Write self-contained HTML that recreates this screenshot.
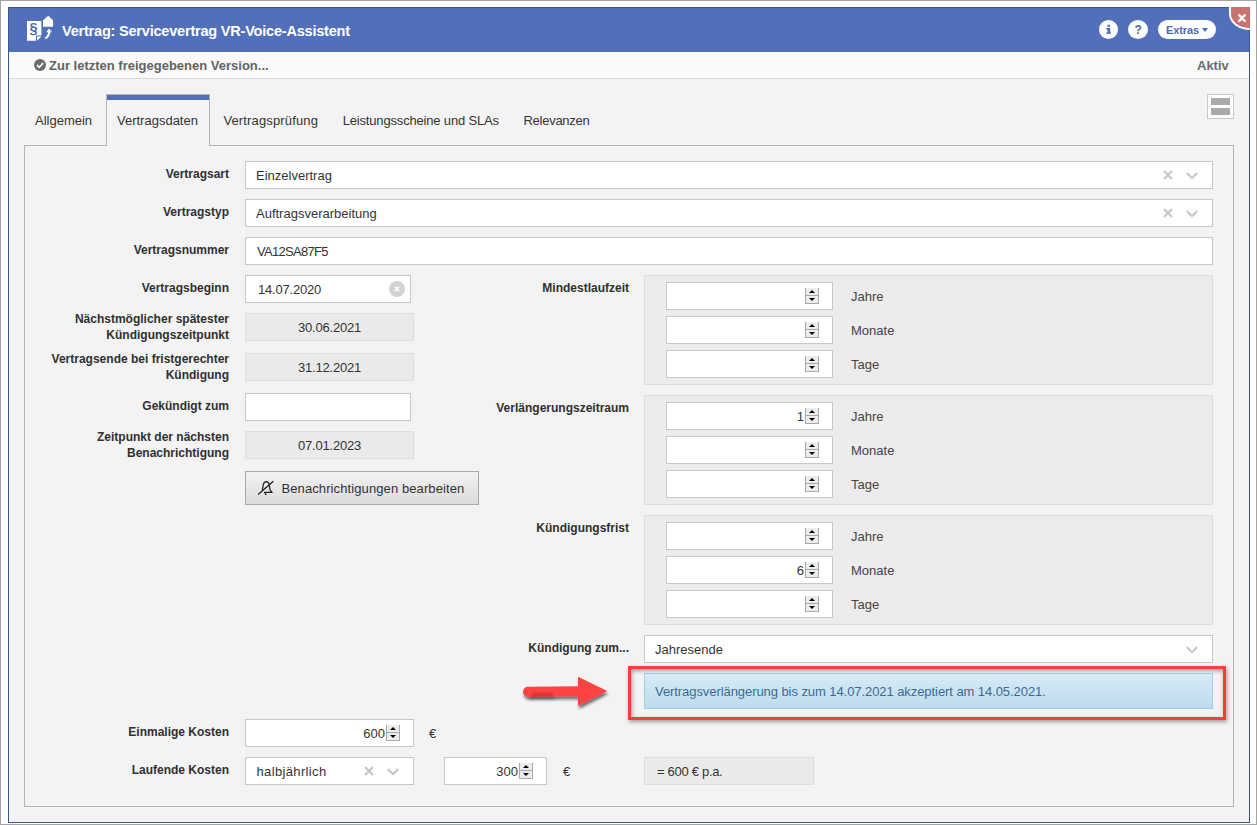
<!DOCTYPE html>
<html><head><meta charset="utf-8"><style>
*{box-sizing:border-box;margin:0;padding:0}
html,body{width:1257px;height:825px;overflow:hidden;background:#fff}
body{position:relative;font-family:"Liberation Sans",sans-serif;color:#333}
.a{position:absolute}
.t{position:absolute;white-space:nowrap;line-height:16px}
.lbl{position:absolute;white-space:nowrap;line-height:16px;font-size:12px;font-weight:bold;color:#2b2b2b;text-align:right;right:1028px}
.inp{position:absolute;background:#fff;border:1px solid #c8c8c8;height:28px}
.ro{position:absolute;background:#eaeaea;border:1px solid #dedede;height:28px}
.val{position:absolute;white-space:nowrap;line-height:16px;font-size:13px;color:#333}
.grp{position:absolute;left:644px;width:569px;height:110px;background:#ececec;border:1px solid #dcdcdc}
.num{position:absolute;left:666px;width:167px;height:28px;background:#fff;border:1px solid #c8c8c8}
.unit{position:absolute;left:851px;white-space:nowrap;line-height:16px;font-size:13px;color:#444}
.spin{position:absolute;width:14px;height:16px;background:#ececec;border:1px solid #a8a8a8;border-top:none}
.spin:before{content:"";position:absolute;left:0;right:0;top:7px;height:1px;background:#a8a8a8}
.spin i{position:absolute;left:3px;width:0;height:0;border-left:3px solid transparent;border-right:3px solid transparent}
.spin i.u{top:2px;border-bottom:3px solid #000}
.spin i.d{top:10px;border-top:3px solid #000}
.xi{position:absolute;width:10px;height:10px}
</style></head>
<body>
<div class="a" style="left:0px;top:0px;width:1257px;height:825px;border:1px solid #a3a3a3;background:#fff"></div>
<div class="a" style="left:8px;top:7px;width:1242px;height:816px;border:1px solid #3a5795;background:#f3f3f3"></div>
<div class="a" style="left:9px;top:8px;width:1240px;height:44px;background:#5170b9"></div>
<div class="a" style="left:1229px;top:7px;width:21px;height:23px;background:#fff;border-bottom-left-radius:21px 16px"></div>
<div class="a" style="left:1231px;top:7px;width:19px;height:21px;background:#c97370;border-bottom-left-radius:19px 14px"></div>
<svg class="a" style="left:1237px;top:13px" width="10" height="10" viewBox="0 0 10 10"><path d="M2.2 2.2L7.8 7.8M7.8 2.2L2.2 7.8" stroke="#fff" stroke-width="2.4" stroke-linecap="round"/></svg>
<svg class="a" style="left:22px;top:12px" width="40" height="34" viewBox="0 0 40 34">
<path d="M5 9H19.4V23.5H14V28.8H5Z" fill="#fff"/>
<path d="M15 24.5H19.4L15 28.8Z" fill="#fff"/>
<text x="7.6" y="21.3" font-family="Liberation Sans" font-weight="bold" font-size="14.5" fill="#4d6db6">§</text>
<path d="M21 8.2L26.2 3.7L31.1 8.2V14.8H21Z" fill="#fff"/>
<path d="M23.2 26.4C25.8 25 27.2 22.5 27.3 19.5" fill="none" stroke="#fff" stroke-width="2.2"/>
<path d="M24 20.2L27.2 16.6L30 20.2Z" fill="#fff"/>
</svg>
<div class="t" style="left:62px;top:22.98px;font-size:14.5px;font-weight:700;color:#fff;letter-spacing:-0.2px">Vertrag: Servicevertrag VR-Voice-Assistent</div>
<div class="a" style="left:1099px;top:20px;width:19px;height:19px;border-radius:50%;background:#fff"></div>
<svg class="a" style="left:1104px;top:23px" width="10" height="12" viewBox="0 0 10 12"><rect x="3.3" y="1.8" width="2.7" height="1.9" fill="#4b68b0"/><path d="M2.3 5H6.2V9.4H7V10.8H2.2V9.4H3.5V6.4H2.3Z" fill="#4b68b0"/></svg>
<div class="a" style="left:1128px;top:20px;width:20px;height:19px;border-radius:50%;background:#fff"></div>
<div class="t" style="left:1134.5px;top:21.84px;font-size:12px;font-weight:700;color:#4b68b0;">?</div>
<div class="a" style="left:1158px;top:20px;width:58px;height:19px;border-radius:10px;background:#fff"></div>
<div class="t" style="left:1166px;top:22.19px;font-size:11px;font-weight:700;color:#4d6bb5;letter-spacing:-0.1px">Extras</div>
<div class="a" style="left:1201.5px;top:28px;width:0;height:0;border-left:3.5px solid transparent;border-right:3.5px solid transparent;border-top:4.2px solid #4d6bb5"></div>
<div class="a" style="left:9px;top:52px;width:1240px;height:27px;background:#fafafa;border-bottom:1px solid #dadada"></div>
<svg class="a" style="left:34px;top:59px" width="12" height="12" viewBox="0 0 12 12"><circle cx="6" cy="6" r="6" fill="#6b6b6b"/><path d="M3 6.2L5.2 8.3L9.1 4.2" fill="none" stroke="#fff" stroke-width="1.8"/></svg>
<div class="t" style="left:49px;top:57.50px;font-size:13px;font-weight:700;color:#636363;">Zur letzten freigegebenen Version...</div>
<div class="t" style="left:1197px;top:57.50px;font-size:13px;font-weight:700;color:#6b6b6b;">Aktiv</div>
<div class="a" style="left:1207px;top:94px;width:27px;height:25px;background:#fff;border:1px solid #c8c8c8"></div>
<div class="a" style="left:1211px;top:98px;width:19px;height:7px;background:#aaa"></div>
<div class="a" style="left:1211px;top:108px;width:19px;height:7px;background:#aaa"></div>
<div class="a" style="left:24px;top:145px;width:1210px;height:662px;border:1px solid #b4b4b4;background:#f3f3f3"></div>
<div class="a" style="left:106px;top:94px;width:104px;height:52px;border:1px solid #b4b4b4;border-bottom:none;background:#f3f3f3"></div>
<div class="a" style="left:107px;top:95px;width:102px;height:5px;background:#5170b9"></div>
<div class="t" style="left:35px;top:112.50px;font-size:13px;font-weight:400;color:#333;">Allgemein</div>
<div class="t" style="left:117px;top:112.50px;font-size:13px;font-weight:400;color:#333;">Vertragsdaten</div>
<div class="t" style="left:223.4px;top:112.50px;font-size:13px;font-weight:400;color:#333;letter-spacing:0.14px">Vertragsprüfung</div>
<div class="t" style="left:342.7px;top:112.50px;font-size:13px;font-weight:400;color:#333;letter-spacing:-0.17px">Leistungsscheine und SLAs</div>
<div class="t" style="left:523.4px;top:112.50px;font-size:13px;font-weight:400;color:#333;letter-spacing:-0.25px">Relevanzen</div>
<div class="t" style="right:1028px;top:165.84px;font-size:12px;font-weight:700;color:#303030;text-align:right;">Vertragsart</div>
<div class="a" style="left:245px;top:161px;width:968px;height:28px;background:#fff;border:1px solid #c8c8c8"></div>
<div class="t" style="left:256px;top:167.50px;font-size:13px;font-weight:400;color:#333;">Einzelvertrag</div>
<svg class="a" style="left:1163px;top:170px" width="10" height="10" viewBox="0 0 10 10"><path d="M1 1L9 9M9 1L1 9" stroke="#c4c4c4" stroke-width="2"/></svg>
<svg class="a" style="left:1186px;top:172px" width="12" height="8" viewBox="0 0 12 8"><path d="M0.8 1L6 6.2L11.2 1" fill="none" stroke="#c4c4c4" stroke-width="2"/></svg>
<div class="t" style="right:1028px;top:203.84px;font-size:12px;font-weight:700;color:#303030;text-align:right;">Vertragstyp</div>
<div class="a" style="left:245px;top:199px;width:968px;height:28px;background:#fff;border:1px solid #c8c8c8"></div>
<div class="t" style="left:256px;top:205.50px;font-size:13px;font-weight:400;color:#333;">Auftragsverarbeitung</div>
<svg class="a" style="left:1163px;top:208px" width="10" height="10" viewBox="0 0 10 10"><path d="M1 1L9 9M9 1L1 9" stroke="#c4c4c4" stroke-width="2"/></svg>
<svg class="a" style="left:1186px;top:210px" width="12" height="8" viewBox="0 0 12 8"><path d="M0.8 1L6 6.2L11.2 1" fill="none" stroke="#c4c4c4" stroke-width="2"/></svg>
<div class="t" style="right:1028px;top:241.84px;font-size:12px;font-weight:700;color:#303030;text-align:right;">Vertragsnummer</div>
<div class="a" style="left:245px;top:237px;width:968px;height:28px;background:#fff;border:1px solid #c8c8c8"></div>
<div class="t" style="left:257px;top:243.50px;font-size:13px;font-weight:400;color:#333;letter-spacing:-0.7px">VA12SA87F5</div>
<div class="t" style="right:1028px;top:279.84px;font-size:12px;font-weight:700;color:#303030;text-align:right;">Vertragsbeginn</div>
<div class="a" style="left:245px;top:275px;width:166px;height:28px;background:#fff;border:1px solid #c8c8c8"></div>
<div class="t" style="left:258px;top:281.50px;font-size:13px;font-weight:400;color:#333;letter-spacing:-0.2px">14.07.2020</div>
<svg class="a" style="left:389px;top:281px" width="16" height="16" viewBox="0 0 16 16"><circle cx="8" cy="8" r="8" fill="#d3d3d3"/><path d="M5.8 5.8L10.2 10.2M10.2 5.8L5.8 10.2" stroke="#fff" stroke-width="1.5"/></svg>
<div class="t" style="right:1028px;top:310.84px;font-size:12px;font-weight:700;color:#303030;text-align:right;">Nächstmöglicher spätester</div>
<div class="t" style="right:1028px;top:326.84px;font-size:12px;font-weight:700;color:#303030;text-align:right;">Kündigungszeitpunkt</div>
<div class="a" style="left:245px;top:313px;width:169px;height:28px;background:#eaeaea;border:1px solid #dedede"></div>
<div class="t" style="left:298px;top:319.50px;font-size:13px;font-weight:400;color:#333;letter-spacing:-0.2px">30.06.2021</div>
<div class="t" style="right:1028px;top:350.84px;font-size:12px;font-weight:700;color:#303030;text-align:right;">Vertragsende bei fristgerechter</div>
<div class="t" style="right:1028px;top:366.84px;font-size:12px;font-weight:700;color:#303030;text-align:right;">Kündigung</div>
<div class="a" style="left:245px;top:353px;width:169px;height:28px;background:#eaeaea;border:1px solid #dedede"></div>
<div class="t" style="left:298px;top:359.50px;font-size:13px;font-weight:400;color:#333;letter-spacing:-0.2px">31.12.2021</div>
<div class="t" style="right:1028px;top:397.84px;font-size:12px;font-weight:700;color:#303030;text-align:right;">Gekündigt zum</div>
<div class="a" style="left:245px;top:393px;width:166px;height:28px;background:#fff;border:1px solid #c8c8c8"></div>
<div class="t" style="right:1028px;top:428.84px;font-size:12px;font-weight:700;color:#303030;text-align:right;">Zeitpunkt der nächsten</div>
<div class="t" style="right:1028px;top:444.84px;font-size:12px;font-weight:700;color:#303030;text-align:right;">Benachrichtigung</div>
<div class="a" style="left:245px;top:431px;width:169px;height:28px;background:#eaeaea;border:1px solid #dedede"></div>
<div class="t" style="left:298px;top:437.50px;font-size:13px;font-weight:400;color:#333;letter-spacing:-0.2px">07.01.2023</div>
<div class="a" style="left:245px;top:471px;width:234px;height:34px;border:1px solid #a9a9a9;background:linear-gradient(#f2f2f2,#dcdcdc)"></div>
<svg class="a" style="left:257px;top:480px" width="18" height="17" viewBox="0 0 18 17"><path d="M6.9 12.4H15.1L13 9.8L12.2 4.4Q11.7 1.9 9.3 1.7Q6.9 1.9 6.4 4.4L5.3 10.2" fill="none" stroke="#222" stroke-width="1.25" stroke-linejoin="round"/><path d="M8 13.2Q8.3 14.6 9.6 14.6" fill="none" stroke="#222" stroke-width="1.3"/><path d="M1.1 14.6L16.4 1.2" stroke="#222" stroke-width="1.3"/></svg>
<div class="t" style="left:281.5px;top:480.50px;font-size:13px;font-weight:400;color:#333;letter-spacing:0.1px">Benachrichtigungen bearbeiten</div>
<div class="t" style="right:628px;top:279.84px;font-size:12px;font-weight:700;color:#303030;text-align:right;">Mindestlaufzeit</div>
<div class="a" style="left:644px;top:275px;width:569px;height:110px;background:#ececec;border:1px solid #dcdcdc"></div>
<div class="a" style="left:666px;top:282px;width:167px;height:28px;background:#fff;border:1px solid #c8c8c8"></div>
<div class="spin" style="left:805px;top:288px"><i class="u"></i><i class="d"></i></div>
<div class="t" style="left:851px;top:288.50px;font-size:13px;font-weight:400;color:#444;">Jahre</div>
<div class="a" style="left:666px;top:316px;width:167px;height:28px;background:#fff;border:1px solid #c8c8c8"></div>
<div class="spin" style="left:805px;top:322px"><i class="u"></i><i class="d"></i></div>
<div class="t" style="left:851px;top:322.50px;font-size:13px;font-weight:400;color:#444;">Monate</div>
<div class="a" style="left:666px;top:350px;width:167px;height:28px;background:#fff;border:1px solid #c8c8c8"></div>
<div class="spin" style="left:805px;top:356px"><i class="u"></i><i class="d"></i></div>
<div class="t" style="left:851px;top:356.50px;font-size:13px;font-weight:400;color:#444;">Tage</div>
<div class="t" style="right:628px;top:399.84px;font-size:12px;font-weight:700;color:#303030;text-align:right;">Verlängerungszeitraum</div>
<div class="a" style="left:644px;top:395px;width:569px;height:110px;background:#ececec;border:1px solid #dcdcdc"></div>
<div class="a" style="left:666px;top:402px;width:167px;height:28px;background:#fff;border:1px solid #c8c8c8"></div>
<div class="spin" style="left:805px;top:408px"><i class="u"></i><i class="d"></i></div>
<div class="t" style="right:453px;top:408.50px;font-size:13px;color:#333">1</div>
<div class="t" style="left:851px;top:408.50px;font-size:13px;font-weight:400;color:#444;">Jahre</div>
<div class="a" style="left:666px;top:436px;width:167px;height:28px;background:#fff;border:1px solid #c8c8c8"></div>
<div class="spin" style="left:805px;top:442px"><i class="u"></i><i class="d"></i></div>
<div class="t" style="left:851px;top:442.50px;font-size:13px;font-weight:400;color:#444;">Monate</div>
<div class="a" style="left:666px;top:470px;width:167px;height:28px;background:#fff;border:1px solid #c8c8c8"></div>
<div class="spin" style="left:805px;top:476px"><i class="u"></i><i class="d"></i></div>
<div class="t" style="left:851px;top:476.50px;font-size:13px;font-weight:400;color:#444;">Tage</div>
<div class="t" style="right:628px;top:519.84px;font-size:12px;font-weight:700;color:#303030;text-align:right;">Kündigungsfrist</div>
<div class="a" style="left:644px;top:515px;width:569px;height:110px;background:#ececec;border:1px solid #dcdcdc"></div>
<div class="a" style="left:666px;top:522px;width:167px;height:28px;background:#fff;border:1px solid #c8c8c8"></div>
<div class="spin" style="left:805px;top:528px"><i class="u"></i><i class="d"></i></div>
<div class="t" style="left:851px;top:528.50px;font-size:13px;font-weight:400;color:#444;">Jahre</div>
<div class="a" style="left:666px;top:556px;width:167px;height:28px;background:#fff;border:1px solid #c8c8c8"></div>
<div class="spin" style="left:805px;top:562px"><i class="u"></i><i class="d"></i></div>
<div class="t" style="right:453px;top:562.50px;font-size:13px;color:#333">6</div>
<div class="t" style="left:851px;top:562.50px;font-size:13px;font-weight:400;color:#444;">Monate</div>
<div class="a" style="left:666px;top:590px;width:167px;height:28px;background:#fff;border:1px solid #c8c8c8"></div>
<div class="spin" style="left:805px;top:596px"><i class="u"></i><i class="d"></i></div>
<div class="t" style="left:851px;top:596.50px;font-size:13px;font-weight:400;color:#444;">Tage</div>
<div class="t" style="right:628px;top:639.84px;font-size:12px;font-weight:700;color:#303030;text-align:right;">Kündigung zum...</div>
<div class="a" style="left:644px;top:635px;width:569px;height:28px;background:#fff;border:1px solid #c8c8c8"></div>
<div class="t" style="left:655px;top:641.50px;font-size:13px;font-weight:400;color:#333;">Jahresende</div>
<svg class="a" style="left:1186px;top:646px" width="12" height="8" viewBox="0 0 12 8"><path d="M0.8 1L6 6.2L11.2 1" fill="none" stroke="#c4c4c4" stroke-width="2"/></svg>
<div class="a" style="left:628px;top:666px;width:598px;height:54px;border:3px solid #ff3b3b;box-shadow:1px 2px 4px rgba(0,0,0,.35), inset 1px 2px 4px rgba(0,0,0,.35)"></div>
<div class="a" style="left:644px;top:673px;width:569px;height:36px;background:linear-gradient(#d8eaf6,#bddcee);border:1px solid #a2cce3"></div>
<div class="t" style="left:655px;top:683.50px;font-size:13px;font-weight:400;color:#3a6b95;letter-spacing:-0.07px">Vertragsverlängerung bis zum 14.07.2021 akzeptiert am 14.05.2021.</div>
<svg class="a" style="left:515px;top:670px" width="105" height="45" viewBox="0 0 105 45">
<defs><filter id="bl" x="-50%" y="-150%" width="200%" height="400%"><feGaussianBlur stdDeviation="1"/></filter><filter id="sh" x="-20%" y="-40%" width="140%" height="180%"><feGaussianBlur in="SourceAlpha" stdDeviation="1.8"/><feOffset dx="1" dy="3"/><feComponentTransfer><feFuncA type="linear" slope="0.55"/></feComponentTransfer><feMerge><feMergeNode/><feMergeNode in="SourceGraphic"/></feMerge></filter></defs>
<g filter="url(#sh)"><path d="M13 16.7L63 16.2L63 6.7L92.3 20.9L63 35.9L63 26.2L13 26.7A5 5 0 0 1 13 16.7Z" fill="#ff4242"/></g><rect x="17" y="23" width="21" height="3" fill="#a82828" opacity="0.5" filter="url(#bl)"/><rect x="15" y="26.5" width="25" height="3" fill="#000" opacity="0.2" filter="url(#bl)"/>
</svg>
<div class="t" style="right:1028px;top:723.84px;font-size:12px;font-weight:700;color:#303030;text-align:right;">Einmalige Kosten</div>
<div class="a" style="left:245px;top:719px;width:169px;height:28px;background:#fff;border:1px solid #c8c8c8"></div>
<div class="spin" style="left:386px;top:725px"><i class="u"></i><i class="d"></i></div>
<div class="t" style="right:872px;top:725.50px;font-size:13px;color:#333">600</div>
<div class="t" style="left:429px;top:725.50px;font-size:13px;font-weight:400;color:#333;">€</div>
<div class="t" style="right:1028px;top:761.84px;font-size:12px;font-weight:700;color:#303030;text-align:right;">Laufende Kosten</div>
<div class="a" style="left:245px;top:757px;width:169px;height:28px;background:#fff;border:1px solid #c8c8c8"></div>
<div class="t" style="left:256.5px;top:763.50px;font-size:13px;font-weight:400;color:#333;letter-spacing:0.35px">halbjährlich</div>
<svg class="a" style="left:364px;top:766px" width="10" height="10" viewBox="0 0 10 10"><path d="M1 1L9 9M9 1L1 9" stroke="#c4c4c4" stroke-width="2"/></svg>
<svg class="a" style="left:387px;top:768px" width="12" height="8" viewBox="0 0 12 8"><path d="M0.8 1L6 6.2L11.2 1" fill="none" stroke="#c4c4c4" stroke-width="2"/></svg>
<div class="a" style="left:444px;top:757px;width:103px;height:28px;background:#fff;border:1px solid #c8c8c8"></div>
<div class="spin" style="left:519px;top:763px"><i class="u"></i><i class="d"></i></div>
<div class="t" style="right:739px;top:763.50px;font-size:13px;color:#333">300</div>
<div class="t" style="left:563px;top:763.50px;font-size:13px;font-weight:400;color:#333;">€</div>
<div class="a" style="left:644px;top:757px;width:170px;height:28px;background:#eaeaea;border:1px solid #dedede"></div>
<div class="t" style="left:657px;top:763.50px;font-size:13px;font-weight:400;color:#333;letter-spacing:-0.3px">= 600 € p.a.</div>
</body></html>
